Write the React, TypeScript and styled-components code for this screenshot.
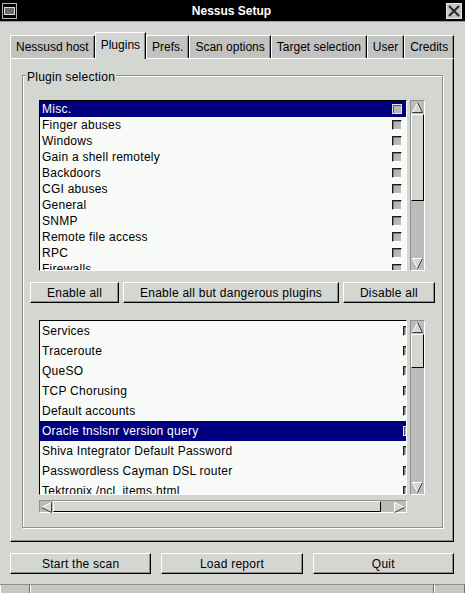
import React from "react";
import styled, { createGlobalStyle } from "styled-components";

const GlobalStyle = createGlobalStyle`
  html, body {
    margin: 0;
    padding: 0;
    background: #d4d6d2;
  }
  body {
    font-family: "Liberation Sans", Arial, Helvetica, sans-serif;
    font-size: 12px;
    letter-spacing: 0.25px;
    color: #000;
  }
`;

const Window = styled.div`
  width: 465px;
  height: 593px;
  display: flex;
  flex-direction: column;
  background: #d4d6d2;
  overflow: hidden;
`;

const TitleBar = styled.div`
  height: 21px;
  flex: none;
  display: flex;
  align-items: center;
  padding: 0 3px 0 2px;
  background: #000;
  border-bottom: 1px solid #9c9e9a;
`;

const TitleText = styled.div`
  flex: 1;
  text-align: center;
  color: #fff;
  font-weight: bold;
  font-size: 12px;
  letter-spacing: 0;
`;

const Body = styled.div`
  display: flex;
  flex-direction: column;
  padding: 10px 11px 0 10px;
`;

const TabStrip = styled.div`
  display: flex;
  align-items: flex-end;
  height: 26px;
  position: relative;
  z-index: 1;
`;

const Tab = styled.div<{ $active?: boolean }>`
  box-sizing: border-box;
  height: ${(p) => (p.$active ? 27 : 23)}px;
  margin-bottom: ${(p) => (p.$active ? -1 : 0)}px;
  padding: 0 5px ${(p) => (p.$active ? 3 : 0)}px;
  display: flex;
  align-items: center;
  white-space: nowrap;
  letter-spacing: 0;
  background: ${(p) => (p.$active ? "#d4d6d2" : "#c2c3c0")};
  border-top: 1px solid #fff;
  border-left: 1px solid #fff;
  border-right: 1px solid #000;
  box-shadow: inset -1px 0 0 #8c8e8a;
`;

const TabPanel = styled.div`
  box-sizing: border-box;
  height: 484px;
  display: flex;
  flex-direction: column;
  padding: 16px 10px 13px 11px;
  border-top: 1px solid #fff;
  border-left: 1px solid #fff;
  border-right: 1px solid #000;
  border-bottom: 1px solid #000;
  box-shadow: inset -1px -1px 0 #8c8e8a;
`;

const Frame = styled.div`
  position: relative;
  flex: 1;
  display: flex;
  flex-direction: column;
  padding: 24px 7px 12px 7px;
  border: 1px solid #8e908c;
  box-shadow: inset 1px 1px 0 #fff, 1px 1px 0 #fff;
`;

const FrameLabel = styled.span`
  position: absolute;
  top: -6px;
  left: 3px;
  padding: 0 1px;
  line-height: 14px;
  background: #d4d6d2;
`;

const UpperArea = styled.div`
  display: grid;
  grid-template-columns: 368px 15px;
  column-gap: 3px;
  height: 171px;
  margin: 0 10px 0 9px;
`;

const LowerArea = styled.div`
  display: grid;
  grid-template-columns: 368px 15px;
  grid-template-rows: 175px 13px;
  column-gap: 3px;
  row-gap: 5px;
  margin: 17px 10px 0 9px;
`;

const ListBox = styled.div`
  box-sizing: border-box;
  height: 100%;
  overflow: hidden;
  background: #f7faf6;
  border-top: 1px solid #000;
  border-left: 1px solid #000;
  border-right: 1px solid #fff;
  border-bottom: 1px solid #fff;
`;

const ListRow = styled.div<{ $height: number; $width?: number; $selected?: boolean }>`
  display: flex;
  align-items: center;
  height: ${(p) => p.$height}px;
  width: ${(p) => (p.$width ? `${p.$width}px` : "auto")};
  padding-left: 2px;
  background: ${(p) => (p.$selected ? "#00007f" : "transparent")};
  color: ${(p) => (p.$selected ? "#fff" : "#000")};
  white-space: nowrap;
`;

const RowLabel = styled.span`
  flex: 1;
`;

const CheckBox = styled.span<{ $selected?: boolean }>`
  box-sizing: border-box;
  flex: none;
  width: 10px;
  height: 10px;
  margin-right: 4px;
  background: #b7b8b5;
  border-top: 1px solid ${(p) => (p.$selected ? "#e6e6e6" : "#1a1a1a")};
  border-left: 1px solid ${(p) => (p.$selected ? "#e6e6e6" : "#1a1a1a")};
  border-right: 1px solid ${(p) => (p.$selected ? "#e6e6e6" : "#fff")};
  border-bottom: 1px solid ${(p) => (p.$selected ? "#e6e6e6" : "#fff")};
  box-shadow: inset 1px 1px 0 ${(p) => (p.$selected ? "#555" : "#7a7a7a")};
`;

const Scrollbar = styled.div<{ $horizontal?: boolean }>`
  box-sizing: border-box;
  display: flex;
  flex-direction: ${(p) => (p.$horizontal ? "row" : "column")};
  height: 100%;
  background: #bcbdba;
  border-top: 1px solid #8e908c;
  border-left: 1px solid #8e908c;
  border-right: 1px solid #fff;
  border-bottom: 1px solid #fff;
`;

const ScrollThumb = styled.div<{ $size: number; $horizontal?: boolean }>`
  box-sizing: border-box;
  flex: none;
  ${(p) => (p.$horizontal ? `width: ${p.$size}px;` : `height: ${p.$size}px;`)}
  background: #d4d6d2;
  border-top: 1px solid #fff;
  border-left: 1px solid #fff;
  border-right: 1px solid #000;
  border-bottom: 1px solid #000;
`;

const ScrollTrough = styled.div`
  flex: 1;
`;

const ArrowBox = styled.div`
  flex: none;
  width: 13px;
  height: 13px;
  display: flex;
`;

const ButtonRow = styled.div`
  display: flex;
  justify-content: space-between;
  margin: 11px 0 0 0;
`;

const PushButton = styled.div<{ $grow?: boolean }>`
  box-sizing: border-box;
  height: 21px;
  display: flex;
  align-items: center;
  justify-content: center;
  padding: 0 16px;
  flex: ${(p) => (p.$grow ? 1 : "none")};
  white-space: nowrap;
  background: #d4d6d2;
  border-top: 1px solid #fff;
  border-left: 1px solid #fff;
  border-right: 1px solid #000;
  border-bottom: 1px solid #000;
  box-shadow: inset -1px -1px 0 #8c8e8a;
`;

const DialogButtons = styled.div`
  display: flex;
  gap: 10px;
  margin-top: 11px;
`;

const StatusStrip = styled.div`
  margin-top: auto;
  height: 8px;
  display: flex;
  background: #c6c7c4;
  border-top: 1px solid #8e908c;
`;

const StatusCell = styled.div<{ $width?: number }>`
  flex: ${(p) => (p.$width ? `none` : 1)};
  width: ${(p) => (p.$width ? `${p.$width}px` : "auto")};
  border-left: 1px solid #fff;
  border-right: 1px solid #6e706c;
`;

type Dir = "up" | "down" | "left" | "right";

// outlined triangles, lit from the upper left like the old motif arrows
const arrowStrokes: Record<Dir, { light: string; dark: string; fill: string }> = {
  up: { light: "M1.5 11.5 L6.5 1.5", dark: "M6.5 1.5 L11.5 11.5 L1.5 11.5", fill: "6.5,1.5 11.5,11.5 1.5,11.5" },
  down: { light: "M11.5 1.5 L1.5 1.5 L6.5 11.5", dark: "M6.5 11.5 L11.5 1.5", fill: "1.5,1.5 11.5,1.5 6.5,11.5" },
  left: { light: "M11.5 1.5 L1.5 6.5", dark: "M1.5 6.5 L11.5 11.5 L11.5 1.5", fill: "11.5,1.5 11.5,11.5 1.5,6.5" },
  right: { light: "M1.5 11.5 L1.5 1.5 L11.5 6.5", dark: "M11.5 6.5 L1.5 11.5", fill: "1.5,1.5 11.5,6.5 1.5,11.5" },
};

const ScrollArrow = ({ dir }: { dir: Dir }) => {
  const s = arrowStrokes[dir];
  return (
    <ArrowBox>
      <svg width="13" height="13" viewBox="0 0 13 13">
        <polygon points={s.fill} fill="#d4d6d2" />
        <path d={s.light} fill="none" stroke="#fff" strokeWidth="1" />
        <path d={s.dark} fill="none" stroke="#3c3c3c" strokeWidth="1" />
      </svg>
    </ArrowBox>
  );
};

const VScroll = ({ thumbTop }: { thumbTop: number }) => (
  <Scrollbar>
    <ScrollArrow dir="up" />
    <ScrollThumb $size={thumbTop} />
    <ScrollTrough />
    <ScrollArrow dir="down" />
  </Scrollbar>
);

const HScroll = ({ thumb }: { thumb: number }) => (
  <Scrollbar $horizontal>
    <ScrollArrow dir="left" />
    <ScrollThumb $horizontal $size={thumb} />
    <ScrollTrough />
    <ScrollArrow dir="right" />
  </Scrollbar>
);

const MenuIcon = () => (
  <svg width="15" height="16" viewBox="0 0 15 16">
    <rect x="0.5" y="0.5" width="14" height="15" fill="#000" stroke="#b8b8b8" />
    <rect x="2.5" y="4.5" width="10" height="7" fill="#6a6a6a" stroke="#d8d8d8" />
  </svg>
);

const CloseBox = () => (
  <svg width="16" height="16" viewBox="0 0 16 16">
    <rect x="0.5" y="0.5" width="15" height="15" fill="#c4c4c4" stroke="#e8e8e8" />
    <path d="M3 3 L13 13 M13 3 L3 13" stroke="#2a2a2a" strokeWidth="2" />
  </svg>
);

const tabs = ["Nessusd host", "Plugins", "Prefs.", "Scan options", "Target selection", "User", "Credits"];

const families = [
  "Misc.",
  "Finger abuses",
  "Windows",
  "Gain a shell remotely",
  "Backdoors",
  "CGI abuses",
  "General",
  "SNMP",
  "Remote file access",
  "RPC",
  "Firewalls",
];

const plugins = [
  "Services",
  "Traceroute",
  "QueSO",
  "TCP Chorusing",
  "Default accounts",
  "Oracle tnslsnr version query",
  "Shiva Integrator Default Password",
  "Passwordless Cayman DSL router",
  "Tektronix /ncl_items.html",
];

export default function App() {
  return (
    <Window>
      <GlobalStyle />
      <TitleBar>
        <MenuIcon />
        <TitleText>Nessus Setup</TitleText>
        <CloseBox />
      </TitleBar>
      <Body>
        <TabStrip>
          {tabs.map((t) => (
            <Tab key={t} $active={t === "Plugins"}>
              {t}
            </Tab>
          ))}
        </TabStrip>
        <TabPanel>
          <Frame>
            <FrameLabel>Plugin selection</FrameLabel>
            <UpperArea>
              <ListBox>
                {families.map((f, i) => (
                  <ListRow key={f} $height={16} $selected={i === 0}>
                    <RowLabel>{f}</RowLabel>
                    <CheckBox $selected={i === 0} />
                  </ListRow>
                ))}
              </ListBox>
              <VScroll thumbTop={87} />
            </UpperArea>
            <ButtonRow>
              <PushButton>Enable all</PushButton>
              <PushButton>Enable all but dangerous plugins</PushButton>
              <PushButton>Disable all</PushButton>
            </ButtonRow>
            <LowerArea>
              <ListBox>
                {plugins.map((p, i) => (
                  <ListRow key={p} $height={20} $width={375} $selected={i === 5}>
                    <RowLabel>{p}</RowLabel>
                    <CheckBox $selected={i === 5} />
                  </ListRow>
                ))}
              </ListBox>
              <VScroll thumbTop={34} />
              <HScroll thumb={328} />
            </LowerArea>
          </Frame>
        </TabPanel>
        <DialogButtons>
          <PushButton $grow>Start the scan</PushButton>
          <PushButton $grow>Load report</PushButton>
          <PushButton $grow>Quit</PushButton>
        </DialogButtons>
      </Body>
      <StatusStrip>
        <StatusCell $width={28} />
        <StatusCell />
        <StatusCell $width={29} />
      </StatusStrip>
    </Window>
  );
}
